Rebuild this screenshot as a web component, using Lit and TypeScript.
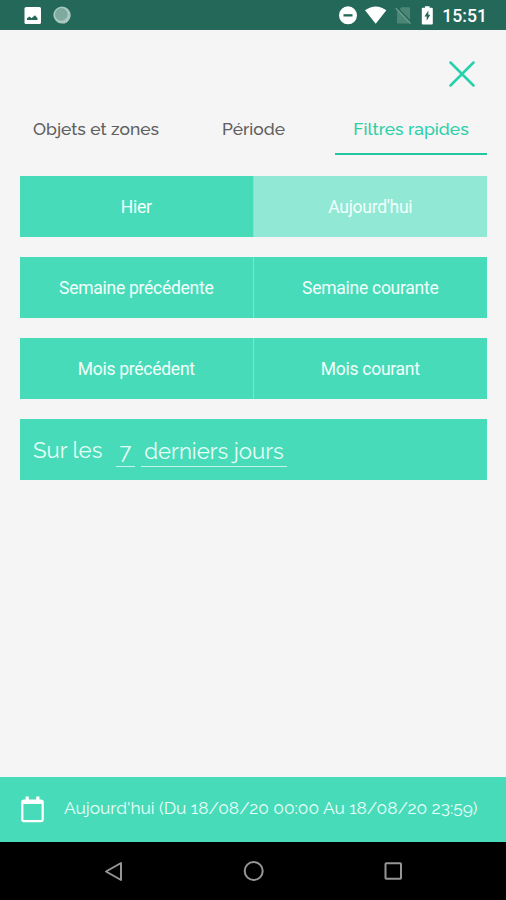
import { LitElement, html, css } from "lit";
import { customElement, property, state } from "lit/decorators.js";
import { classMap } from "lit/directives/class-map.js";

@customElement("status-bar")
class StatusBar extends LitElement {
  static styles = css`
    :host {
      display: flex;
      justify-content: space-between;
      height: 29.5px;
      background: #236859;
      color: #fff;
    }
    svg { display: block; }
    .time {
      font: 500 17.6px/32px Roboto, sans-serif;
      margin-right: 19px;
    }
    .right { display: flex; }
  `;
  render() {
    return html`
      <svg width="90" height="29" viewBox="0 0 90 29">
        <rect x="24.5" y="7" width="16.5" height="17" rx="1.6" fill="#fff" />
        <path d="M27 20v-1.800l2.500-1.600 2 1.600 3.500-3 2.500 3V20z" fill="#236859" />
        <circle cx="62" cy="15" r="8.6" fill="#a9c9c0" />
        <path d="M69 10.5a8.6 8.6 0 0 1-9.500 12.800a8.500 8.500 0 0 0 9.500-12.800z" fill="#e4f0ec" />
        <circle cx="61.300" cy="14.400" r="6.300" fill="#7faa9f" />
      </svg>
      <div class="right">
        <svg width="107" height="29" viewBox="336 0 107 29">
          <circle cx="349" cy="15.300" r="9" fill="#fff" />
          <rect x="344.500" y="14.200" width="9" height="2.300" fill="#236859" />
          <path d="M366 10.200q10.700-7.600 21.400 0L376.700 23.800z" fill="#fff" />
          <path d="M398 12l4.500-4.800h7.500q1 0 1 1V23.500h-12q-1 0-1-1z" fill="#4c8677" />
          <path d="M397.800 7.300l14.800 15.300" stroke="#236859" stroke-width="1.400" />
          <path d="M396.800 8.300l14.800 15.300" stroke="#6b9c90" stroke-width="1.300" />
          <path d="M426 6.300h4.600v1.500h2.200q1 0 1 1v14.700q0 1-1 1h-9q-1 0-1-1V8.800q0-1 1-1h2.200z" fill="#fff" />
          <path d="M429.300 10.500l-3.800 6h2.200v4.300l3.600-6h-2z" fill="#236859" />
        </svg>
        <span class="time">15:51</span>
      </div>
    `;
  }
}

@customElement("filter-pair")
class FilterPair extends LitElement {
  @property({ attribute: false }) labels: string[] = [];
  @property({ type: Number }) selected = -1;
  static styles = css`
    :host {
      display: grid;
      grid-template-columns: 232.500px 1fr;
      height: 61px;
      background: #48dbb9;
      color: #f2fffb;
      font: 17.500px Roboto, sans-serif;
      letter-spacing: -0.270px;
    }
    .cell {
      display: flex;
      align-items: center;
      justify-content: center;
      padding-top: 1px;
    }
    .cell + .cell { border-left: 1px solid #7de4cd; }
    .cell.on { background: #91e9d5; }
  `;
  render() {
    return this.labels.map(
      (l, i) => html`<div class=${classMap({ cell: true, on: i === this.selected })}>${l}</div>`
    );
  }
}

@customElement("app-root")
class AppRoot extends LitElement {
  @state() private active = 2;
  private tabs = ["Objets et zones", "Période", "Filtres rapides"];

  static styles = css`
    :host {
      display: flex;
      flex-direction: column;
      height: 900px;
      background: #f5f5f5;
      font-family: Raleway, Lato, sans-serif;
      overflow: hidden;
    }
    svg { display: block; }
    .top {
      display: flex;
      justify-content: flex-end;
      padding: 31px 31px 0 0;
      height: 44.5px;
      box-sizing: border-box;
    }
    .top svg { flex: none; }
    .tabs {
      display: grid;
      grid-template-columns: repeat(3, 152px);
      column-gap: 5.5px;
      margin-left: 20px;
      padding-top: 36px;
      height: 81.500px;
      box-sizing: border-box;
    }
    .tab {
      box-sizing: border-box;
      height: 45px;
      text-align: center;
      font-size: 17.450px;
      font-weight: 500;
      line-height: 39px;
      color: #606060;
      white-space: nowrap;
      border-bottom: 2px solid transparent;
    }
    .tab.on { color: #2ccfa8; border-color: #22c7a2; }
    .filters {
      display: flex;
      flex-direction: column;
      gap: 20px;
      padding: 20.500px 19px 0 20px;
      flex: 1;
    }
    .last {
      display: flex;
      height: 61px;
      box-sizing: border-box;
      padding: 12px 13px;
      background: #48dbb9;
      color: #e6fff8;
      font-size: 22.200px;
      line-height: 38px;
      white-space: nowrap;
    }
    .lead { width: 83px; }
    .field {
      box-sizing: border-box;
      height: 36px;
      line-height: 40px;
      border-bottom: 1.500px solid #c5f5e8;
      text-align: center;
    }
    .days { width: 19px; margin-right: 6px; }
    .unit { width: 146px; }
    .summary {
      display: flex;
      align-items: center;
      height: 65px;
      background: #48dbb9;
      color: #e8fff9;
      font-size: 17.350px;
      white-space: nowrap;
    }
    .summary svg { margin: 0 20px 0 21px; }
    .summary span { padding-bottom: 3px; }
    .nav { height: 58px; background: #000; }
  `;

  render() {
    return html`
      <status-bar></status-bar>
      <div class="top">
        <svg width="26" height="26" viewBox="0 0 26 26">
          <path d="M1.500 1.500l23 23M24.500 1.500l-23 23" fill="none" stroke="#25d0aa" stroke-width="2.500" stroke-linecap="round" />
        </svg>
      </div>
      <div class="tabs">
        ${this.tabs.map(
          (t, i) => html`<div class=${classMap({ tab: true, on: i === this.active })} @click=${() => (this.active = i)}>${t}</div>`
        )}
      </div>
      <div class="filters">
        <filter-pair .labels=${["Hier", "Aujourd'hui"]} .selected=${1}></filter-pair>
        <filter-pair .labels=${["Semaine précédente", "Semaine courante"]}></filter-pair>
        <filter-pair .labels=${["Mois précédent", "Mois courant"]}></filter-pair>
        <div class="last">
          <span class="lead">Sur les</span>
          <span class="field days">7</span>
          <span class="field unit">derniers jours</span>
        </div>
      </div>
      <div class="summary">
        <svg width="23" height="27" viewBox="0 0 23 27">
          <path d="M3 4.500h17q1.700 0 1.700 1.700v17.300q0 1.700-1.700 1.700H3q-1.700 0-1.700-1.700V6.200q0-1.700 1.700-1.700z" fill="none" stroke="#fff" stroke-width="2.200" />
          <path d="M1.500 4h20v4h-20zM4.500 0.500h3.300v4H4.500zM15.200 0.500h3.300v4h-3.300z" fill="#fff" />
        </svg>
        <span>Aujourd'hui (Du 18/08/20 00:00 Au 18/08/20 23:59)</span>
      </div>
      <svg class="nav" width="506" height="58" viewBox="0 842 506 58" fill="none" stroke="#969696" stroke-width="2" stroke-linejoin="round">
        <path d="M121 863v17l-15-8.500z" />
        <circle cx="253.700" cy="871" r="9" />
        <rect x="385.500" y="863.300" width="15.500" height="15.500" rx="0.800" />
      </svg>
    `;
  }
}
